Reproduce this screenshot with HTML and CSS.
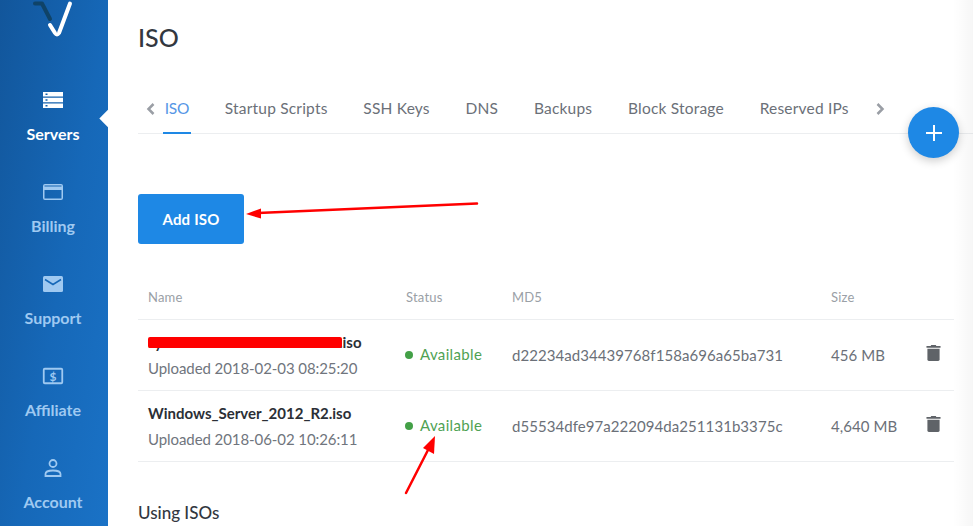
FILE: index.html
```html
<!DOCTYPE html>
<html lang="en">
<head>
<meta charset="utf-8">
<title>ISO</title>
<link rel="stylesheet" href="styles.css">
</head>
<body>
<div class="app">
  <aside class="sidebar">
    <div class="logo">
      <svg width="48" height="40" viewBox="0 0 48 40"><path class="logo-dark" d="M6 3.500H13L21 19" /><path class="logo-light" d="M21 25L26 33Q28 36 30 33L41 3.500" /></svg>
    </div>
    <nav class="nav">
      <a class="nav-item active">
        <svg class="nav-icon" viewBox="0 0 24 24"><path fill="currentColor" fill-rule="evenodd" d="M2 4H22V8.500H2ZM4.500 5.500V7H6.500V5.500ZM2 9.800H22V14.200H2ZM4.500 11.300V12.700H6.500V11.300ZM2 15.500H22V20H2ZM4.500 17V18.500H6.500V17Z"/></svg>
        <span>Servers</span>
      </a>
      <a class="nav-item">
        <svg class="nav-icon" viewBox="0 0 24 24"><path fill="currentColor" fill-rule="evenodd" d="M4 4H20Q22 4 22 6V18Q22 20 20 20H4Q2 20 2 18V6Q2 4 4 4ZM3.500 5.500V6.500H20.500V5.500ZM3.500 10V18.500H20.500V10Z"/></svg>
        <span>Billing</span>
      </a>
      <a class="nav-item">
        <svg class="nav-icon" viewBox="0 0 24 24"><path fill="currentColor" d="M3.500 4H20.500Q22 4 22 5.500V18.500Q22 20 20.500 20H3.500Q2 20 2 18.500V5.500Q2 4 3.500 4Z"/><path class="mail-flap" d="M4 7.500L12 12.500L20 7.500"/></svg>
        <span>Support</span>
      </a>
      <a class="nav-item">
        <svg class="nav-icon" viewBox="0 0 24 24"><rect class="bill" x="2.750" y="4.750" width="18.500" height="14.500" rx="1"/><text class="bill-sign" x="12" y="16.500">$</text></svg>
        <span>Affiliate</span>
      </a>
      <a class="nav-item">
        <svg class="nav-icon" viewBox="0 0 24 24"><circle class="bill" cx="12" cy="7.500" r="3.500"/><path class="bill" d="M4.500 20V18Q4.500 14.500 12 14.500Q19.500 14.500 19.500 18V20Z"/></svg>
        <span>Account</span>
      </a>
    </nav>
  </aside>
  <main class="main">
    <h1 class="title">ISO</h1>
    <div class="tabs">
      <svg class="chev" width="10" height="14" viewBox="0 0 10 14"><path d="M7.500 2L2.500 7L7.500 12"/></svg>
      <a class="tab current">ISO</a>
      <a class="tab">Startup Scripts</a>
      <a class="tab">SSH Keys</a>
      <a class="tab">DNS</a>
      <a class="tab">Backups</a>
      <a class="tab">Block Storage</a>
      <a class="tab">Reserved IPs</a>
      <svg class="chev chev-right" width="10" height="14" viewBox="0 0 10 14"><path d="M2.500 2L7.500 7L2.500 12"/></svg>
    </div>
    <button class="add-btn">Add ISO</button>
    <table class="iso-table">
      <thead>
        <tr><th class="c-name">Name</th><th class="c-status">Status</th><th class="c-md5">MD5</th><th class="c-size">Size</th><th class="c-del"></th></tr>
      </thead>
      <tbody>
        <tr>
          <td><div class="file redacted-file"><span class="hidden-part">sy</span>.iso</div><div class="uploaded">Uploaded 2018-02-03 08:25:20</div></td>
          <td class="avail"><i class="dot"></i>Available</td>
          <td class="plain">d22234ad34439768f158a696a65ba731</td>
          <td class="plain">456 MB</td>
          <td><svg class="trash" viewBox="0 0 16 18"><path d="M5.500 0.500H10.500L11 1.500H15.500V3.500H0.500V1.500H5Z"/><path d="M1.500 4.500H14.500V16Q14.500 17.500 13 17.500H3Q1.500 17.500 1.500 16Z"/></svg></td>
        </tr>
        <tr>
          <td><div class="file">Windows_Server_2012_R2.iso</div><div class="uploaded">Uploaded 2018-06-02 10:26:11</div></td>
          <td class="avail"><i class="dot"></i>Available</td>
          <td class="plain">d55534dfe97a222094da251131b3375c</td>
          <td class="plain">4,640 MB</td>
          <td><svg class="trash" viewBox="0 0 16 18"><path d="M5.500 0.500H10.500L11 1.500H15.500V3.500H0.500V1.500H5Z"/><path d="M1.500 4.500H14.500V16Q14.500 17.500 13 17.500H3Q1.500 17.500 1.500 16Z"/></svg></td>
        </tr>
      </tbody>
    </table>
    <h2 class="using">Using ISOs</h2>
  </main>
  <div class="edge"></div>
  <button class="fab" aria-label="Add"><svg width="18" height="18" viewBox="0 0 18 18"><path d="M9 1V17M1 9H17"/></svg></button>
  <svg class="notes" width="973" height="526" viewBox="0 0 973 526">
    <rect class="red-fill" x="148" y="337" width="194" height="11" rx="2"/>
    <path class="red-line" d="M477 203.500L258 213"/>
    <path class="red-fill" d="M246 214L261 208.500L261 218.500Z"/>
    <path class="red-line" d="M406 493L428 450"/>
    <path class="red-fill" d="M435 436L434 454L423 448Z"/>
  </svg>
</div>
</body>
</html>
```

FILE: styles.css
```css
* { box-sizing: border-box; }
html, body { margin: 0; height: 100%; background: #fff; }
body { font-family: "Lato", "Liberation Sans", sans-serif; color: #3a3f47; overflow: hidden; }
.app { position: relative; display: flex; width: 973px; height: 526px; overflow: hidden; }

.sidebar { width: 108px; flex: none; background: linear-gradient(100deg, #12569b 0%, #1668b8 55%, #1a72c6 100%); display: flex; flex-direction: column; }
.logo { flex: none; height: 78px; padding-left: 29px; }
.logo svg { display: block; fill: none; stroke-linecap: round; stroke-linejoin: round; }
.logo-dark { stroke: #0f4368; stroke-width: 4; }
.logo-light { stroke: #fff; stroke-width: 4; }
.nav { display: flex; flex-direction: column; flex: none; }
.nav-item { flex: none; height: 92px; padding: 10px 2px 0 0; display: flex; flex-direction: column; align-items: center; color: #9fc9f1; font-size: 16px; font-weight: 700; position: relative; }
.nav-item span { margin-top: 12px; line-height: 20px; }
.nav-item.active { color: #fff; }
.nav-item.active::after { content: ""; position: absolute; right: -6.500px; top: 33.500px; width: 13px; height: 13px; background: #fff; transform: rotate(45deg); }
.nav-icon { width: 24px; height: 24px; display: block; }
.mail-flap { fill: none; stroke: #1668b8; stroke-width: 1.500; }
.bill { fill: none; stroke: currentColor; stroke-width: 1.800; }
.bill-sign { fill: currentColor; font-size: 12px; font-weight: 700; text-anchor: middle; }

.main { flex: 1; min-width: 0; padding: 0 19px 0 30px; }
.title { margin: 0; padding-top: 21px; padding-bottom: 1px; font-size: 25px; line-height: 32px; font-weight: 500; color: #33383f; }
.tabs { display: flex; align-items: flex-start; height: 80px; margin-right: -19px; border-bottom: 1px solid #eceef0; padding: 42px 0 0 8px; gap: 35.750px; }
.tab { position: relative; height: 38px; font-size: 15.500px; line-height: 24px; letter-spacing: 0.200px; color: #6b7078; white-space: nowrap; }
.tab.current { color: #5596e6; letter-spacing: -0.300px; }
.tab.current::after { content: ""; position: absolute; left: -2px; right: -2px; bottom: 0; height: 2px; background: #1e88e5; }
.chev { flex: none; margin: 6px -27px 0 0; fill: none; stroke: #9a9ea5; stroke-width: 2.500; }
.chev-right { margin: 6px 0 0 -9px; }

.add-btn { display: block; width: 106px; height: 50px; margin-top: 60px; border: 0; border-radius: 3px; background: #1e88e5; color: #fff; font: 700 15px "Lato", sans-serif; letter-spacing: 0.200px; }

.iso-table { width: 816px; margin-top: 35px; border-collapse: collapse; table-layout: fixed; }
.iso-table th { height: 40px; padding: 0 0 4px 10px; text-align: left; font-size: 13px; letter-spacing: 0.200px; font-weight: 400; color: #9aa0a6; border-bottom: 1px solid #eceef0; vertical-align: middle; }
.c-name { width: 258px; }
.c-status { width: 106px; }
.c-md5 { width: 319px; }
.c-size { width: 94px; }
.c-del { width: 39px; }
.iso-table td { height: 71px; padding: 0 0 0 10px; border-bottom: 1px solid #eceef0; vertical-align: middle; font-size: 15px; color: #6b7078; }
.file { font-weight: 700; color: #2b2f36; font-size: 15px; line-height: 20px; }
.hidden-part { display: inline-block; width: 191px; }
.uploaded { margin-top: 6px; line-height: 20px; font-size: 15px; letter-spacing: -0.080px; color: #70757d; white-space: nowrap; }
.iso-table td.avail { padding-bottom: 2px; color: #4fa253; letter-spacing: 0.350px; white-space: nowrap; }
.dot { display: inline-block; width: 8px; height: 8px; border-radius: 50%; background: #43a047; margin: 0 7px 0 -1px; vertical-align: 1px; }
.plain { white-space: nowrap; letter-spacing: 0.060px; }
.trash { width: 15px; height: 18px; margin: 0 0 4px 1px; fill: #5f6368; display: block; }
.using { margin: 40px 0 0; font-size: 17px; line-height: 22px; font-weight: 500; color: #33383f; }

.edge { position: absolute; top: 0; right: 0; bottom: 0; width: 20px; background: linear-gradient(90deg, rgba(0,0,0,0), rgba(0,0,0,0.035)); pointer-events: none; }
.fab { position: absolute; left: 908px; top: 107px; width: 51px; height: 51px; padding: 0; border: 0; border-radius: 50%; background: #1e88e5; box-shadow: 0 3px 10px rgba(0,0,0,0.2); display: flex; align-items: center; justify-content: center; }
.fab path { stroke: #fff; stroke-width: 2; fill: none; }
.notes { position: absolute; left: 0; top: 0; pointer-events: none; }
.red-fill { fill: #f00; }
.red-line { fill: none; stroke: #f00; stroke-width: 2.500; stroke-linecap: round; }
```
